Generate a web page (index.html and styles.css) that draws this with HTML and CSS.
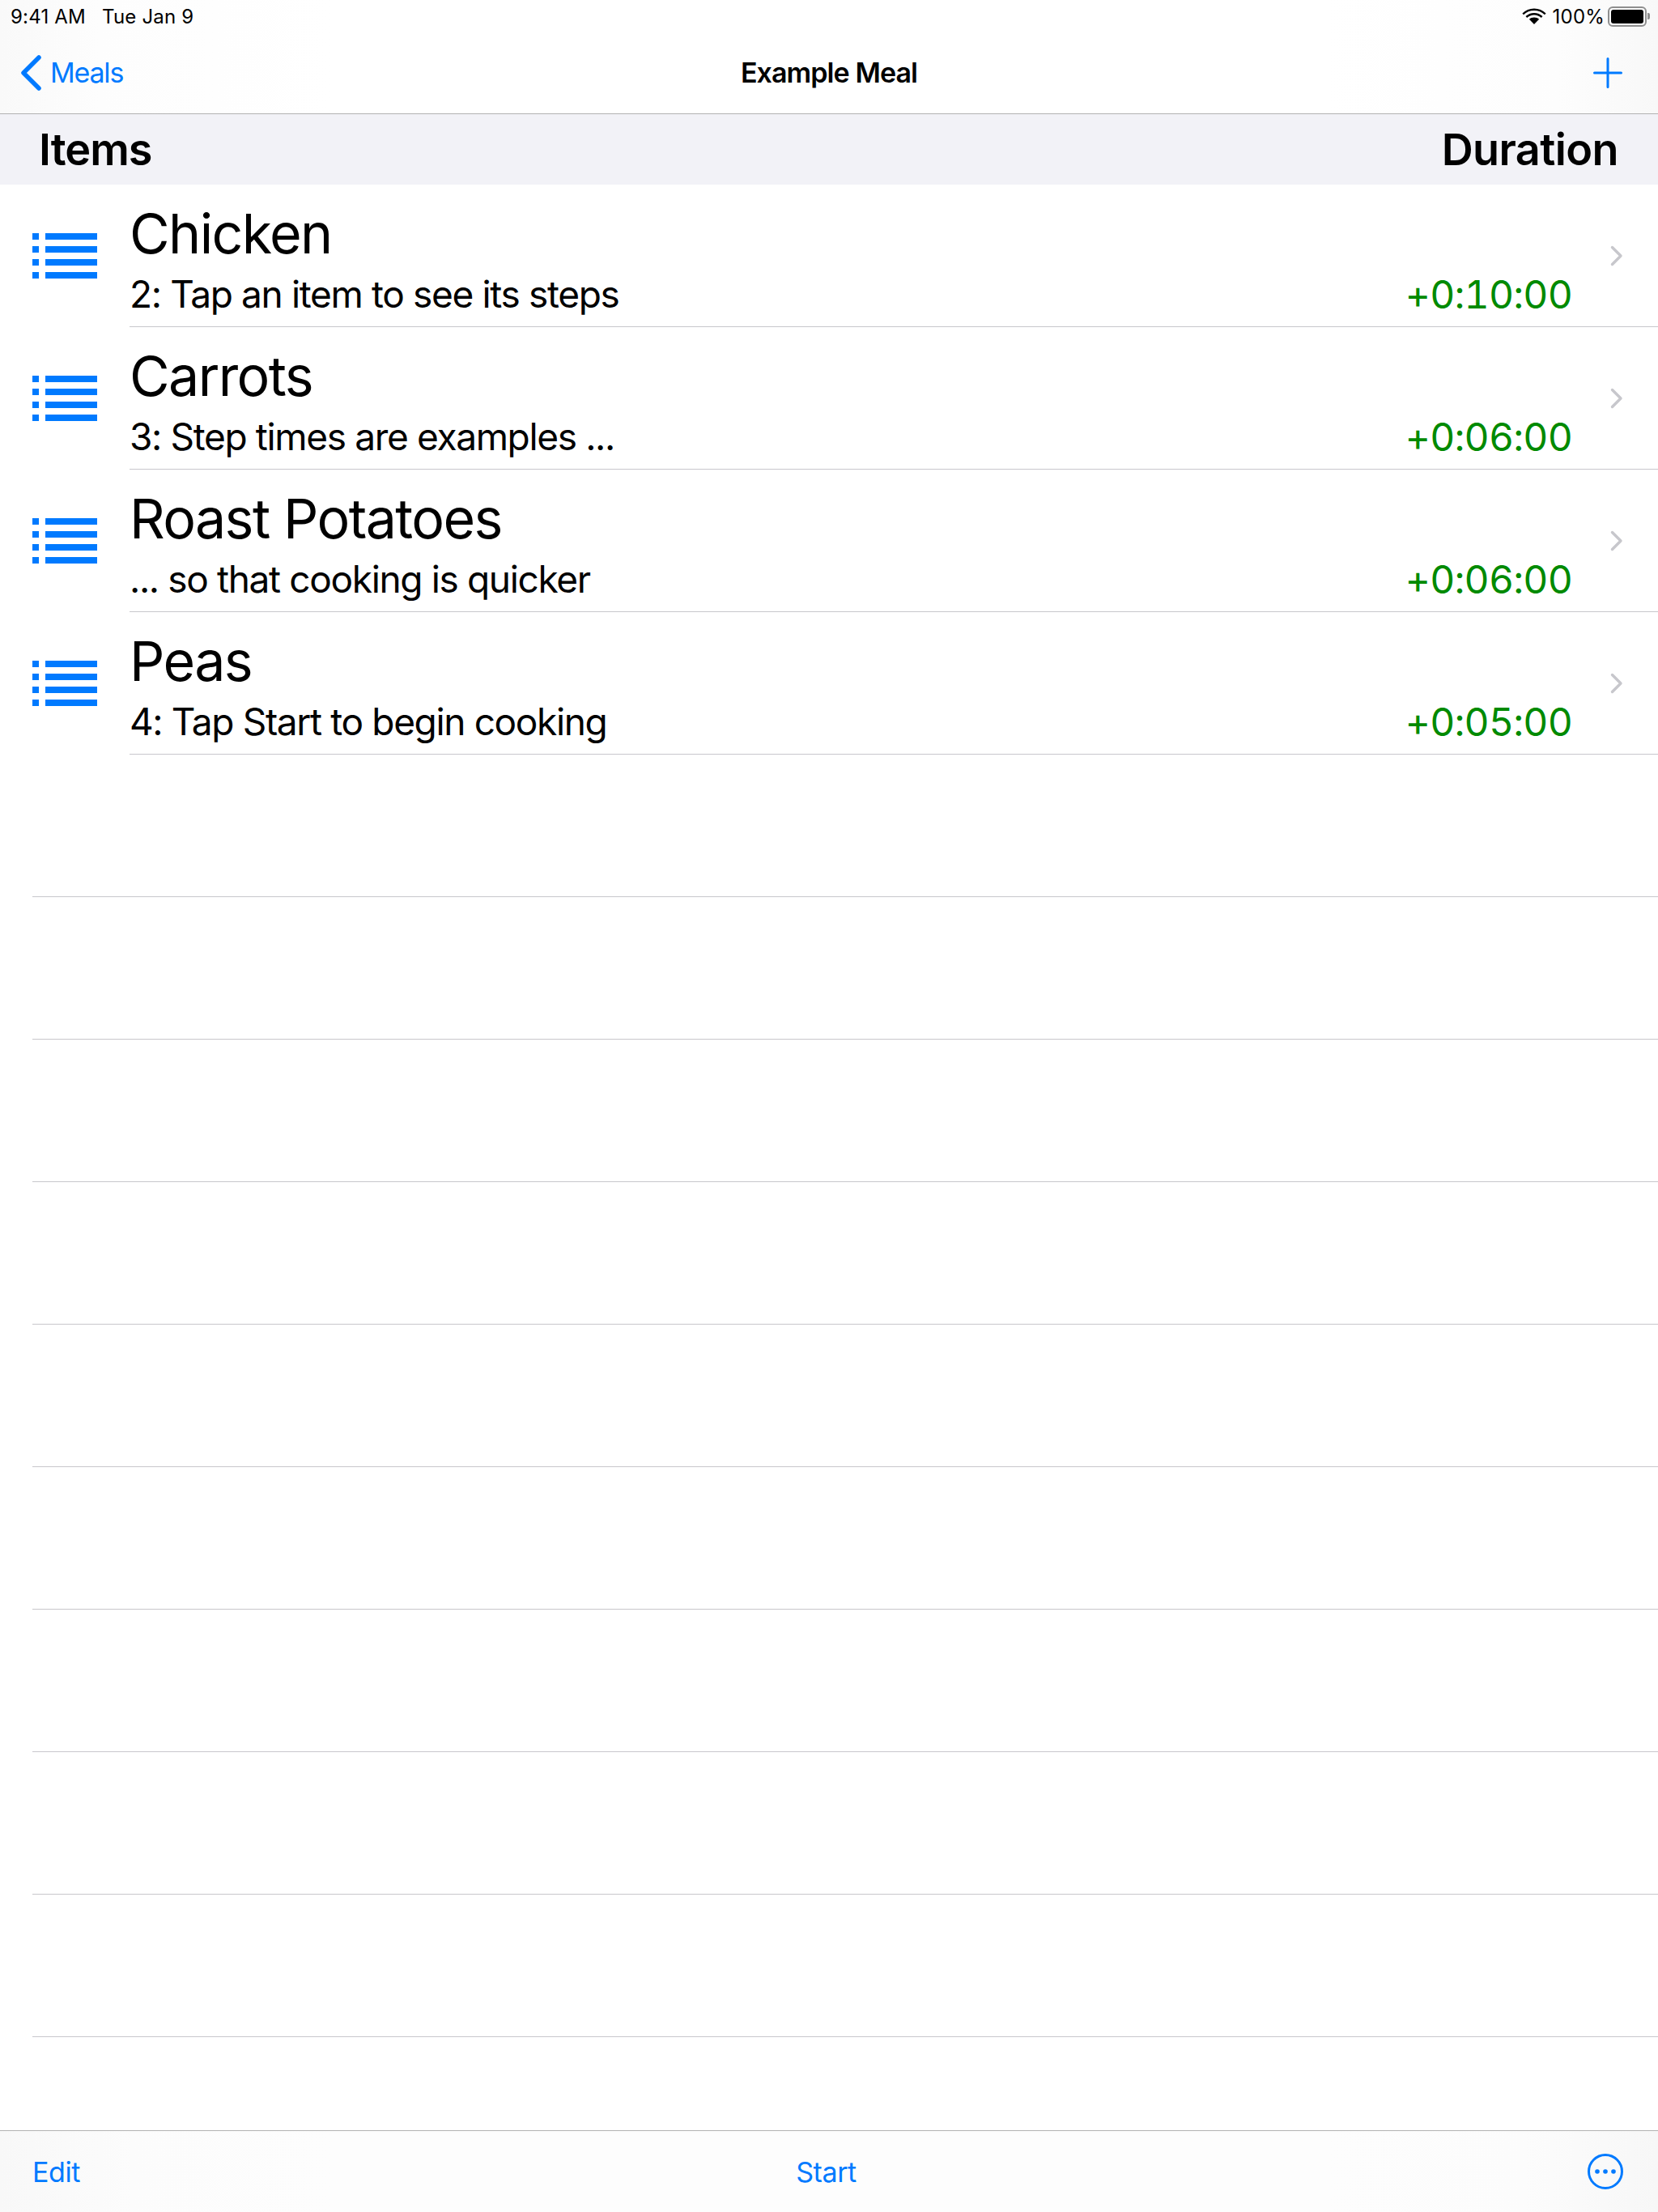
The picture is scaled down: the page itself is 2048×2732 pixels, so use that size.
FILE: index.html
```html
<!DOCTYPE html>
<html lang="en">
<head>
<meta charset="utf-8">
<title>Example Meal</title>
<link rel="stylesheet" href="styles.css">
</head>
<body>
<div class="app">
  <header class="topbar">
    <div class="status">
      <div class="status-left"><span>9:41 AM</span><span>Tue Jan 9</span></div>
      <div class="status-right">
        <svg class="wifi" width="30" height="22" viewBox="0 0 30 22"><path d="M15 4C10 4 5.500 5.900 2 9.200L.4 7.500C4.300 3.700 9.400 1.500 15 1.500S25.700 3.700 29.600 7.500L28 9.200C24.500 5.900 20 4 15 4Z"/><path d="M15 9.500c-3.400 0-6.400 1.300-8.800 3.400L4.500 11.100C7.300 8.600 11 7 15 7s7.700 1.600 10.500 4.100l-1.700 1.800C21.400 10.800 18.400 9.500 15 9.500Z"/><path d="M15 12.500c2.400 0 4.500.9 6.100 2.300L15 21 8.900 14.800c1.600-1.400 3.700-2.300 6.100-2.300Z"/></svg>
        <span class="pct">100%</span>
        <span class="battery"><span class="battery-fill"></span></span>
        <span class="battery-nub"></span>
      </div>
    </div>
    <nav class="navbar">
      <a class="back">
        <svg width="26" height="44" viewBox="0 0 26 44"><path d="M23 3 4 22l19 19" fill="none" stroke="#007aff" stroke-width="5.500" stroke-linecap="round" stroke-linejoin="round"/></svg>
        <span>Meals</span>
      </a>
      <div class="nav-title">Example Meal</div>
      <svg class="plus" width="36" height="38" viewBox="0 0 36 38"><path d="M18 1.500v35M1.500 19h33" fill="none" stroke="#007aff" stroke-width="3" stroke-linecap="round"/></svg>
    </nav>
  </header>

  <div class="columns"><span class="col-items">Items</span><span>Duration</span></div>

  <main class="list">
    <div class="row">
      <svg class="list-icon" width="80" height="56" viewBox="0 0 80 56"><path d="M0 0h8v8H0zM16 0h64v8H16zM0 16h8v8H0zM16 16h64v8H16zM0 32h8v8H0zM16 32h64v8H16zM0 48h8v8H0zM16 48h64v8H16z" fill="#007aff"/></svg>
      <div class="row-body">
        <div class="row-text"><div class="row-title">Chicken</div><div class="row-sub">2: Tap an item to see its steps</div></div>
        <div class="row-time">+0:10:00</div>
        <svg class="chev" width="16" height="26" viewBox="0 0 16 26"><path d="M2.500 2.500 13 13 2.500 23.500" fill="none" stroke="#c7c7cc" stroke-width="3.400" stroke-linecap="round" stroke-linejoin="round"/></svg>
      </div>
    </div>
    <div class="row">
      <svg class="list-icon" width="80" height="56" viewBox="0 0 80 56"><path d="M0 0h8v8H0zM16 0h64v8H16zM0 16h8v8H0zM16 16h64v8H16zM0 32h8v8H0zM16 32h64v8H16zM0 48h8v8H0zM16 48h64v8H16z" fill="#007aff"/></svg>
      <div class="row-body">
        <div class="row-text"><div class="row-title">Carrots</div><div class="row-sub">3: Step times are examples ...</div></div>
        <div class="row-time">+0:06:00</div>
        <svg class="chev" width="16" height="26" viewBox="0 0 16 26"><path d="M2.500 2.500 13 13 2.500 23.500" fill="none" stroke="#c7c7cc" stroke-width="3.400" stroke-linecap="round" stroke-linejoin="round"/></svg>
      </div>
    </div>
    <div class="row">
      <svg class="list-icon" width="80" height="56" viewBox="0 0 80 56"><path d="M0 0h8v8H0zM16 0h64v8H16zM0 16h8v8H0zM16 16h64v8H16zM0 32h8v8H0zM16 32h64v8H16zM0 48h8v8H0zM16 48h64v8H16z" fill="#007aff"/></svg>
      <div class="row-body">
        <div class="row-text"><div class="row-title">Roast Potatoes</div><div class="row-sub">... so that cooking is quicker</div></div>
        <div class="row-time">+0:06:00</div>
        <svg class="chev" width="16" height="26" viewBox="0 0 16 26"><path d="M2.500 2.500 13 13 2.500 23.500" fill="none" stroke="#c7c7cc" stroke-width="3.400" stroke-linecap="round" stroke-linejoin="round"/></svg>
      </div>
    </div>
    <div class="row">
      <svg class="list-icon" width="80" height="56" viewBox="0 0 80 56"><path d="M0 0h8v8H0zM16 0h64v8H16zM0 16h8v8H0zM16 16h64v8H16zM0 32h8v8H0zM16 32h64v8H16zM0 48h8v8H0zM16 48h64v8H16z" fill="#007aff"/></svg>
      <div class="row-body">
        <div class="row-text"><div class="row-title">Peas</div><div class="row-sub">4: Tap Start to begin cooking</div></div>
        <div class="row-time">+0:05:00</div>
        <svg class="chev" width="16" height="26" viewBox="0 0 16 26"><path d="M2.500 2.500 13 13 2.500 23.500" fill="none" stroke="#c7c7cc" stroke-width="3.400" stroke-linecap="round" stroke-linejoin="round"/></svg>
      </div>
    </div>
    <div class="empty"></div><div class="empty"></div><div class="empty"></div><div class="empty"></div><div class="empty"></div><div class="empty"></div><div class="empty"></div><div class="empty"></div><div class="empty"></div>
  </main>

  <footer class="toolbar">
    <span>Edit</span>
    <span class="start">Start</span>
    <svg class="more" width="44" height="44" viewBox="0 0 44 44"><circle cx="22" cy="22" r="20.500" fill="none" stroke="#007aff" stroke-width="3"/><circle cx="12" cy="22" r="2.800" fill="#007aff"/><circle cx="22" cy="22" r="2.800" fill="#007aff"/><circle cx="32" cy="22" r="2.800" fill="#007aff"/></svg>
  </footer>
</div>
</body>
</html>
```

FILE: styles.css
```css
* { box-sizing: border-box; }
html, body { margin: 0; padding: 0; background: #fff; }
body { font-family: Inter, "Liberation Sans", sans-serif; color: #000; }
.app { width: 2048px; height: 2732px; display: flex; flex-direction: column; overflow: hidden; }

.topbar {
  height: 141px;
  flex: none;
  border-bottom: 1px solid #b2b2b2;
  background: linear-gradient(90deg, #f9f9f9 0, #fdfdfd 6%, #fff 20%, #fff 80%, #fdfdfd 94%, #f8f8f8 100%);
}
.status { height: 40px; display: flex; justify-content: space-between; align-items: center; padding: 0 10px 0 13px; font-size: 24px; letter-spacing: 0.2px; }
.status-left { display: flex; gap: 20px; }
.status-right { display: flex; align-items: center; }
.wifi { margin-right: 8px; }
.pct { margin-right: 4px; letter-spacing: 0.2px; }
.battery { width: 48px; height: 25px; border: 2px solid #8e8e8e; border-radius: 6px; padding: 2px; display: block; }
.battery-fill { display: block; width: 100%; height: 100%; background: #000; border-radius: 3px; }
.battery-nub { width: 3px; height: 8px; background: #8e8e8e; border-radius: 0 2px 2px 0; margin-left: 1px; }

.navbar { height: 100px; display: flex; align-items: center; justify-content: space-between; padding: 0 26px 1px 25px; position: relative; }
.back { display: flex; align-items: center; gap: 11px; color: #007aff; font-size: 34px; letter-spacing: -1.2px; }
.nav-title { position: absolute; left: 0; right: 0; text-align: center; font-size: 34px; font-weight: 600; letter-spacing: -0.9px; }
.plus { margin-right: 18px; }

.columns {
  height: 87px; flex: none;
  background: #f2f2f7;
  display: flex; justify-content: space-between; align-items: center;
  padding: 0 49px 0 48px;
  font-size: 54px; font-weight: 600; letter-spacing: -0.6px;
}
.col-items { letter-spacing: -1px; }

.list { flex: 1; min-height: 0; }
.row { height: 176px; display: flex; align-items: flex-start; }
.list-icon { flex: none; margin: 60px 40px 0 40px; }
.row-body { flex: 1; height: 176px; border-bottom: 1px solid #c8c7cc; display: flex; position: relative; }
.row-text { flex: 1; }
.row-title { font-size: 68px; line-height: 80px; margin-top: 20px; letter-spacing: -1.6px; }
.row-sub { font-size: 46px; line-height: 56px; margin-top: 7px; letter-spacing: -1.35px; }
.row-time { align-self: flex-end; margin: 0 106px 9px 0; color: #008a00; font-size: 48px; line-height: 60px; font-variant-numeric: tabular-nums; letter-spacing: -0.8px; }
.chev { position: absolute; right: 43px; top: 75px; }
.empty { height: 176px; margin-left: 40px; border-bottom: 1px solid #c8c7cc; }

.toolbar {
  height: 101px; flex: none;
  border-top: 1px solid #b2b2b2;
  background: linear-gradient(90deg, #f8f8f8 0, #fcfcfc 8%, #fdfdfd 20%, #fdfdfd 80%, #fcfcfc 92%, #f7f7f7 100%);
  display: flex; align-items: center; justify-content: space-between;
  padding: 0 43px 0 40px;
  color: #007aff; font-size: 34px; letter-spacing: -0.4px; position: relative;
}
.start { position: absolute; left: 0; right: 0; text-align: center; margin-left: -7px; }
```
